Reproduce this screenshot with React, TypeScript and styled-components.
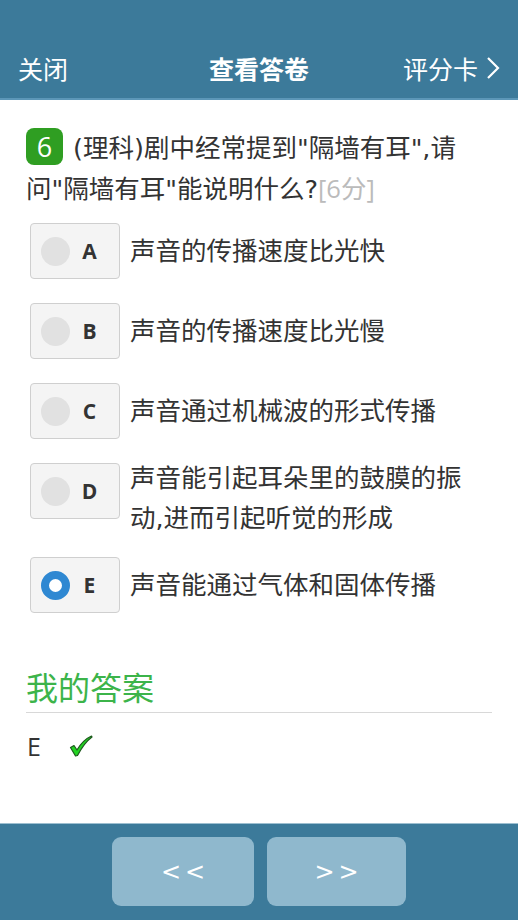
import React from "react";
import styled, { createGlobalStyle } from "styled-components";

const Global = createGlobalStyle`
  html, body { margin: 0; padding: 0; background: #fff; }
  body { font-family: "Open Sans", "Noto Sans CJK SC", sans-serif; color: #333; }
  * { box-sizing: border-box; }
`;

const Page = styled.div`
  width: 518px;
  height: 920px;
  display: flex;
  flex-direction: column;
  background: #fff;
`;

const Header = styled.header`
  flex: none;
  height: 100px;
  background: #3c7a9a;
  border-bottom: 2px solid #5c97b8;
  display: grid;
  grid-template-columns: 1fr auto 1fr;
  align-items: center;
  padding: 48px 18px 10px 18px;
  color: #fff;
  font-family: "Noto Sans CJK SC", sans-serif;
`;

const HeaderLink = styled.span<{ $align: "left" | "right" }>`
  font-size: 25px;
  line-height: 40px;
  justify-self: ${(p) => (p.$align === "left" ? "start" : "end")};
  display: flex;
  align-items: center;
  gap: 8px;
`;

const Title = styled.h1`
  margin: 0;
  font-size: 25px;
  font-weight: 700;
  line-height: 40px;
`;

const Main = styled.main`
  flex: 1;
`;

const Question = styled.div`
  padding: 28px 26px 0 26px;
  font-family: "DejaVu Sans", "Noto Sans CJK SC", sans-serif;
  font-size: 25.5px;
  line-height: 40px;
  color: #333;
`;

const Badge = styled.span`
  display: inline-flex;
  align-items: center;
  justify-content: center;
  width: 37px;
  height: 37px;
  border-radius: 8px;
  background: #2f9e22;
  color: #fff;
  font-family: "Open Sans", sans-serif;
  font-size: 27px;
  line-height: 1;
  vertical-align: top;
  margin-right: 10px;
`;

const Score = styled.span`
  color: #bbb;
  font-family: "Open Sans", "Noto Sans CJK SC", sans-serif;
`;

const Options = styled.div`
  padding: 14px 38px 0 30px;
`;

const OptionRow = styled.div`
  display: flex;
  align-items: flex-start;
  margin-bottom: 24px;
`;

const OptionBox = styled.div`
  flex: none;
  width: 90px;
  height: 56px;
  border: 1px solid #cfcfcf;
  border-radius: 4px;
  background: #f4f4f4;
  display: flex;
  align-items: center;
  padding-left: 10px;
  gap: 11px;
`;

const Radio = styled.span<{ $checked: boolean }>`
  width: 29px;
  height: 29px;
  border-radius: 50%;
  background: ${(p) => (p.$checked ? "#fff" : "#e1e1e1")};
  border: ${(p) => (p.$checked ? "8.5px solid #2f88d2" : "none")};
`;

const Letter = styled.span`
  font-family: "Open Sans", sans-serif;
  font-weight: 700;
  font-size: 21px;
  color: #333;
  width: 17px;
  text-align: center;
`;

const OptionText = styled.div`
  align-self: center;
  margin: -5px 0 -5px 10px;
  font-family: "DejaVu Sans", "Noto Sans CJK SC", sans-serif;
  font-size: 25.5px;
  line-height: 40px;
  color: #333;
`;

const AnswerSection = styled.section`
  padding: 27px 26px 0 26px;
`;

const AnswerTitle = styled.h2`
  margin: 0;
  padding-bottom: 4px;
  border-bottom: 1px solid #d8d8d8;
  color: #3cb44a;
  font-family: "Noto Sans CJK SC", sans-serif;
  font-weight: 400;
  font-size: 32px;
  line-height: 44px;
`;

const AnswerLine = styled.div`
  margin-top: 13px;
  display: flex;
  align-items: center;
  gap: 28px;
  font-family: "Open Sans", sans-serif;
  font-size: 25px;
  line-height: 40px;
  color: #333;
  padding-left: 1px;
`;

const Footer = styled.footer`
  flex: none;
  height: 97px;
  background: #3c7a9a;
  border-top: 1px solid #9dbfd0;
  display: flex;
  justify-content: center;
  gap: 13px;
  padding-top: 13px;
`;

const NavButton = styled.button<{ $w: number }>`
  width: ${(p) => p.$w}px;
  height: 69px;
  border: none;
  border-radius: 9px;
  background: #8fb8cd;
  color: #fff;
  font-family: "DejaVu Sans", sans-serif;
  font-size: 24px;
  letter-spacing: 4px;
  padding: 0 0 0 4px;
  display: flex;
  align-items: center;
  justify-content: center;
`;

const Chevron = () => (
  <svg width="14" height="22" viewBox="0 0 14 22" fill="none">
    <polyline points="2,1 12,11 2,21" stroke="#fff" strokeWidth="2.2" strokeLinejoin="miter" />
  </svg>
);

const Check = () => (
  <svg width="24" height="22" viewBox="0 0 24 22">
    <path
      d="M1.5 12.5 L5 10.5 L8 15 C12 8 17 3.5 22.5 1 L23 2 C17.5 6 13 12 8.5 20.5 L6.5 21 Z"
      fill="#22d422"
      stroke="#1d5a1d"
      strokeWidth="1.2"
      strokeLinejoin="round"
    />
  </svg>
);

const options = [
  { key: "A", text: "声音的传播速度比光快" },
  { key: "B", text: "声音的传播速度比光慢" },
  { key: "C", text: "声音通过机械波的形式传播" },
  { key: "D", text: "声音能引起耳朵里的鼓膜的振动,进而引起听觉的形成" },
  { key: "E", text: "声音能通过气体和固体传播" },
];

export default function App() {
  const selected = "E";
  return (
    <Page>
      <Global />
      <Header>
        <HeaderLink $align="left">关闭</HeaderLink>
        <Title>查看答卷</Title>
        <HeaderLink $align="right">
          评分卡
          <Chevron />
        </HeaderLink>
      </Header>
      <Main>
        <Question>
          <Badge>6</Badge>
          (理科)剧中经常提到"隔墙有耳",请问"隔墙有耳"能说明什么?
          <Score>[6分]</Score>
        </Question>
        <Options>
          {options.map((o) => (
            <OptionRow key={o.key}>
              <OptionBox>
                <Radio $checked={o.key === selected} />
                <Letter>{o.key}</Letter>
              </OptionBox>
              <OptionText>{o.text}</OptionText>
            </OptionRow>
          ))}
        </Options>
        <AnswerSection>
          <AnswerTitle>我的答案</AnswerTitle>
          <AnswerLine>
            <span>E</span>
            <Check />
          </AnswerLine>
        </AnswerSection>
      </Main>
      <Footer>
        <NavButton $w={142}>&lt;&lt;</NavButton>
        <NavButton $w={139}>&gt;&gt;</NavButton>
      </Footer>
    </Page>
  );
}
